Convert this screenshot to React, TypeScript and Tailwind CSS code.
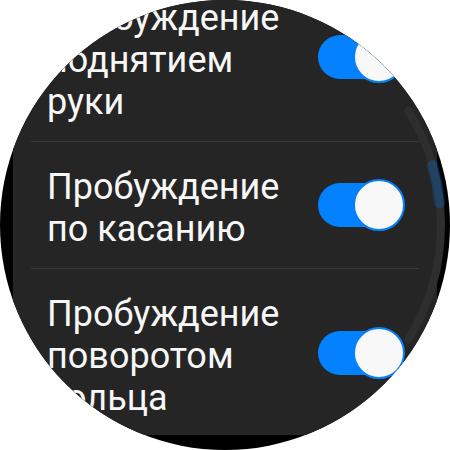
const ROWS: string[] = [
  'Пробуждение поднятием руки',
  'Пробуждение по касанию',
  'Пробуждение поворотом кольца',
]

function Toggle() {
  return (
    <div className="relative h-[52px] w-[87px] shrink-0">
      <div className="absolute top-[4px] left-0 h-[44px] w-[74px] rounded-full bg-[#0381fe]" />
      <div className="absolute top-0 right-0 h-[52px] w-[52px] rounded-full border-2 border-[#0381fe] bg-[#f8f8f8]" />
    </div>
  )
}

function ScrollArc() {
  // arc of radius 216 around the screen centre, track ±32°, thumb −16°…−6°
  const pt = (deg: number) => {
    const r = 216
    const a = (deg * Math.PI) / 180
    return `${225 + r * Math.cos(a)} ${225 + r * Math.sin(a)}`
  }
  return (
    <svg width="450" height="450" viewBox="0 0 450 450" className="pointer-events-none absolute inset-0">
      <path d={`M${pt(-32)} A216 216 0 0 1 ${pt(32)}`} fill="none" stroke="#2e2e2e" strokeWidth="8" strokeLinecap="round" />
      <path
        d={`M${pt(-16)} A216 216 0 0 1 ${pt(-6)}`}
        fill="none"
        stroke="rgba(3,129,254,0.25)"
        strokeWidth="11"
        strokeLinecap="round"
      />
    </svg>
  )
}

export default function App() {
  return (
    <div className="h-[450px] w-[450px] bg-white font-['Roboto',sans-serif]">
      <div className="relative h-[450px] w-[450px] overflow-hidden rounded-full bg-black">
        <div className="mx-[13px] h-[435px] overflow-hidden bg-[#252525]">
          <div className="-mt-[27px] flex flex-col">
            {ROWS.map((label, i) => (
              <div key={label}>
                {i > 0 && <div className="mx-[18px] h-px bg-[#3a3a3a]" />}
                <div className="flex items-center justify-between py-[21px] pr-[32px] pl-[34px]">
                  <div className="relative top-[3px] w-[262px] text-[36px] leading-[42px] text-[#f7f7f7]">{label}</div>
                  <Toggle />
                </div>
              </div>
            ))}
          </div>
        </div>
        <ScrollArc />
      </div>
    </div>
  )
}
